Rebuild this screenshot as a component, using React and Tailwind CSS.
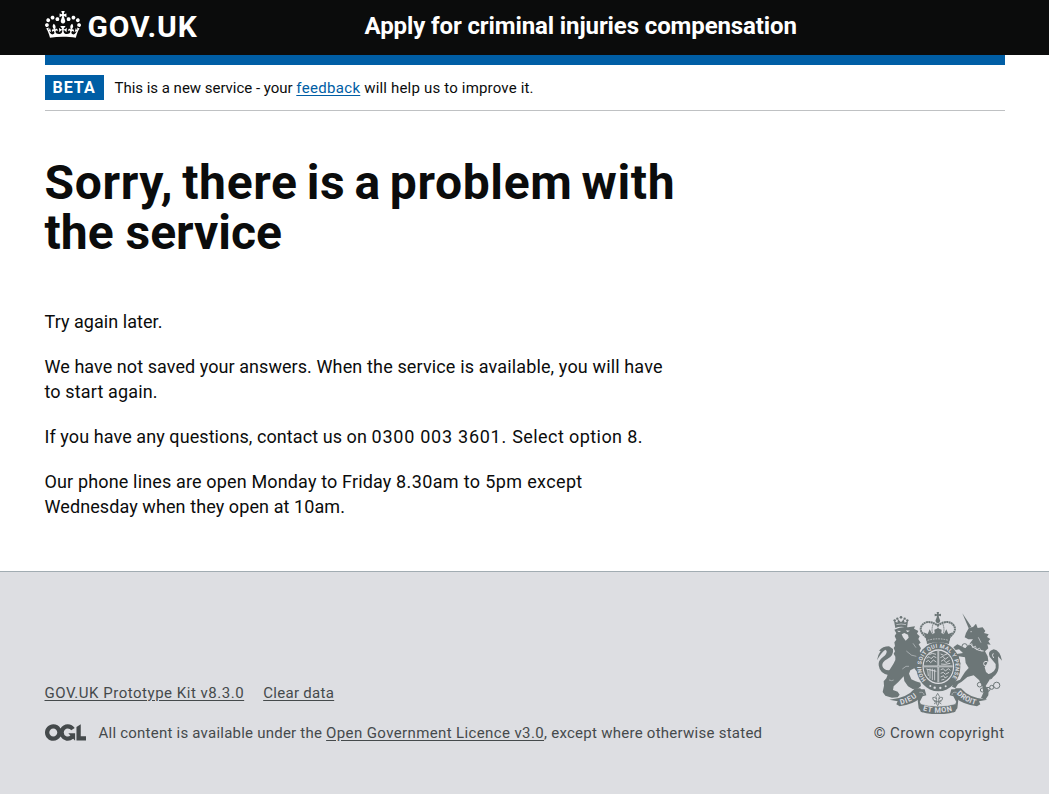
import React from "react";

function Crown() {
  return (
    <svg className="h-[27px] w-9 shrink-0" viewBox="0 0 132 97" preserveAspectRatio="none" fill="currentColor" aria-hidden="true">
      <path
        fillRule="evenodd"
        d="M25 30.2c3.5 1.5 7.7-.2 9.1-3.7 1.5-3.6-.2-7.8-3.9-9.2-3.6-1.4-7.6.3-9.1 3.9-1.4 3.5.3 7.5 3.9 9zM9 39.5c3.6 1.5 7.8-.2 9.2-3.7 1.5-3.6-.2-7.8-3.9-9.1-3.6-1.5-7.6.2-9.1 3.8-1.4 3.5.3 7.5 3.8 9zM4.4 57.2c3.5 1.5 7.7-.2 9.1-3.8 1.5-3.6-.2-7.7-3.9-9.1-3.5-1.5-7.6.3-9.1 3.8-1.4 3.5.3 7.6 3.9 9.1zm38.3-21.4c3.5 1.5 7.7-.2 9.1-3.8 1.5-3.6-.2-7.7-3.9-9.1-3.6-1.5-7.6.3-9.1 3.8-1.3 3.6.4 7.7 3.9 9.1zm64.4-5.6c-3.6 1.5-7.8-.2-9.1-3.7-1.5-3.6.2-7.8 3.8-9.2 3.6-1.4 7.7.3 9.2 3.9 1.3 3.5-.4 7.5-3.9 9zm15.9 9.3c-3.6 1.5-7.7-.2-9.1-3.7-1.5-3.6.2-7.8 3.7-9.1 3.6-1.5 7.7.2 9.2 3.8 1.5 3.5-.3 7.5-3.8 9zm4.7 17.7c-3.6 1.5-7.8-.2-9.2-3.8-1.5-3.6.2-7.7 3.9-9.1 3.6-1.5 7.7.3 9.2 3.8 1.3 3.5-.4 7.6-3.9 9.1zM89.3 35.8c-3.6 1.5-7.8-.2-9.2-3.8-1.4-3.6.2-7.7 3.9-9.1 3.6-1.5 7.7.3 9.2 3.8 1.4 3.6-.3 7.7-3.9 9.1zM69.7 17.7l8.9 4.7V9.3l-8.9 2.8c-.2-.3-.5-.6-.9-.9L72.4 0H59.6l3.5 11.2c-.3.3-.6.5-.9.9l-8.8-2.8v13.1l8.8-4.7c.3.3.6.7.9.9l-5 15.4v.1c-.2.8-.4 1.6-.4 2.4 0 4.1 3.1 7.5 7 8.1h.2c.3 0 .7.1 1 .1.4 0 .7 0 1-.1h.2c4-.6 7.1-4.1 7.1-8.1 0-.8-.1-1.7-.4-2.4V34l-5.1-15.4c.4-.2.7-.6 1-.9zM66 92.8c16.9 0 32.8 1.1 47.1 3.2 4-16.9 8.9-26.7 14-33.5l-9.6-3.4c1 4.9 1.1 7.2 0 10.2-1.5-1.4-3-4.3-4.2-8.7L108.6 76c2.8-2 5-3.2 7.5-3.3-4.4 9.4-10 11.9-13.6 11.2-4.3-.8-6.3-4.6-5.6-7.9 1-4.7 5.7-5.9 8-.5 4.3-8.7-3-11.4-7.6-8.8 7.1-7.2 7.9-13.5 2.1-21.1-8 6.1-8.1 12.3-4.5 20.8-4.7-5.4-12.1-2.5-9.5 6.2 3.4-5.2 7.9-2 7.2 3.1-.6 4.3-6.4 7.8-13.5 7.2-10.3-.9-10.9-8-11.2-13.8 2.5-.5 7.1 1.8 11 7.3L80.2 60c-4.1 4.4-8 5.3-12.3 5.4 1.4-4.4 8-11.6 8-11.6H55.5s6.4 7.2 7.9 11.6c-4.2-.1-8-1-12.3-5.4l1.4 16.4c3.9-5.5 8.5-7.7 10.9-7.3-.3 5.8-.9 12.8-11.1 13.8-7.2.6-12.9-2.9-13.5-7.2-.7-5 3.8-8.3 7.1-3.1 2.7-8.7-4.6-11.6-9.4-6.2 3.7-8.5 3.6-14.7-4.6-20.8-5.8 7.6-5 13.9 2.2 21.1-4.7-2.6-11.9.1-7.7 8.8 2.3-5.5 7.1-4.2 8.1.5.7 3.3-1.3 7.1-5.7 7.9-3.5.7-9-1.8-13.5-11.2 2.5.1 4.7 1.3 7.5 3.3l-4.7-15.4c-1.2 4.4-2.7 7.2-4.3 8.7-1.1-3-.9-5.3 0-10.2l-9.5 3.4c5 6.9 9.9 16.7 14 33.5 14.8-2.1 30.8-3.2 47.7-3.2z"
      />
    </svg>
  );
}

function OglMark() {
  return (
    <svg className="h-[17px] w-[41px] shrink-0" viewBox="0 0 483.2 195.7" fill="currentColor" aria-hidden="true">
      <path d="M421.5 142.8V.1l-50.7 32.3v161.1h112.4v-50.7zm-122.3-9.6A47.12 47.12 0 0 1 221 97.8c0-26 21.1-47.1 47.1-47.1 16.7 0 31.4 8.7 39.7 21.8l42.7-27.2A97.63 97.63 0 0 0 268.1 0c-36.5 0-68.3 20.1-85.1 49.7A98 98 0 0 0 97.8 0C43.9 0 0 43.9 0 97.8s43.9 97.8 97.8 97.8c36.5 0 68.3-20.1 85.1-49.7a97.76 97.76 0 0 0 149.6 25.4l19.4 22.2h3v-87.8h-80l24.3 27.5zM97.8 145c-26 0-47.1-21.1-47.1-47.1s21.1-47.1 47.1-47.1 47.1 21.1 47.1 47.1S123.8 145 97.8 145" />
    </svg>
  );
}

function RoyalArms() {
  return (
    <svg className="h-[102px] w-[125px] text-[#6c7677]" viewBox="36 36 375 306" fill="currentColor" aria-hidden="true">
      <defs>
        <path id="garter" d="M183 240A51 57 0 1 1 257 240" />
        <path id="dieu" d="M107 314Q140 307 162 284" />
        <path id="etmon" d="M173 331Q219 345 266 331" />
        <path id="droit" d="M275 281Q298 307 335 315" />
      </defs>

      {/* lion */}
      <path d="M91 84L87 62L97 68L99 58L108 67L116 58L119 68L129 62L126 84Q108 77 91 84Z" />
      <g>
        <circle cx="89" cy="61" r="3.500" /><circle cx="97" cy="56" r="3.500" /><circle cx="108" cy="52" r="4" /><circle cx="119" cy="56" r="3.500" /><circle cx="127" cy="61" r="3.500" />
      </g>
      <path d="M94 74Q108 70 123 74" className="fill-none stroke-[#dddee2] stroke-2" />
      <path d="M88 89Q108 79 129 82L150 79L147 86L160 93L156 101L164 109L160 117L167 128L161 133L168 145L164 153L170 164L167 176L171 188L164 210L154 213L148 205L136 211L132 221L139 238L152 244L166 248L168 258L158 266L143 267L129 259L118 243L116 229L100 246L86 259L84 270L98 275L104 284L98 292L81 293L61 287L53 276L57 257L56 244L64 235L73 211L85 192L91 180L91 170L86 161L90 154L86 144L90 138L88 127L94 119L89 108L94 100Z" />
      <path d="M72 226Q44 221 41 196Q39 181 55 170Q66 163 65 153L61 149Q48 158 36 181Q38 165 47 153L42 152Q53 139 72 139L84 147Q87 167 67 177Q50 186 52 198Q56 213 77 210Z" />
      <path d="M110 103L118 99L129 104L131 113L122 122L114 112ZM96 92L108 93L102 97ZM123 91L135 92L127 97Z" className="fill-[#dddee2]" />
      <path d="M124 153Q140 170 154 169M112 207Q124 195 132 199M72 240Q81 244 86 240M144 130L153 143" className="fill-none stroke-[#dddee2] stroke-[1.5]" />

      {/* unicorn */}
      <path d="M292 40L319 80L311 85Z" />
      <path d="M312 83L324 81L333 71L338 84L353 82L361 93L357 99L371 103L366 111L376 117L370 124L377 134L367 133L370 145L360 154L368 169L370 184L359 202L363 216L374 225L373 241L362 258L371 269L370 286L361 299L348 294L355 278L352 259L342 240L326 226L307 231L290 245L279 252L271 265L261 260L266 246L285 239L300 216L311 204L302 189L300 172L281 169L287 193L278 196L271 175L275 162L294 159L282 148L272 150L265 142L277 133L301 145L313 132L324 118L310 118L299 112L303 99Z" />
      <path d="M363 226Q397 216 392 192Q384 182 374 170Q366 154 386 148Q405 151 411 182L399 169L400 187Q407 224 369 240Z" />
      <path d="M385 160Q379 165 386 174" className="fill-none stroke-[#dddee2] stroke-[3]" />
      <path d="M316 132Q332 153 356 153" className="fill-none stroke-[#dddee2] stroke-[3]" />
      <path d="M314 125L311 135L321 131L322 143L331 138L335 149L343 144L351 155" className="fill-none stroke-[#dddee2] stroke-[2]" />
      <path d="M340 112L348 128M316 95L321 95" className="fill-none stroke-[#dddee2] stroke-2" />
      <g className="fill-none stroke-current stroke-[3]">
        <circle cx="299" cy="139" r="8" /><circle cx="363" cy="191" r="7" className="stroke-[#dddee2]" /><circle cx="375" cy="230" r="7" />
        <circle cx="344" cy="254" r="7" /><circle cx="352" cy="270" r="6" /><circle cx="369" cy="268" r="6" /><circle cx="380" cy="262" r="6" /><circle cx="395" cy="256" r="9.500" />
      </g>

      {/* crown above the shield */}
      <path d="M215 36H222L221 43L228 41V49L221 47L223 57H214L216 47L209 49V41L216 43Z" />
      <circle cx="218.500" cy="62" r="7" />
      <g className="fill-none stroke-current">
        <path d="M184 112Q159 92 171 76Q187 56 218 76Q250 56 266 76Q278 92 253 112" className="stroke-[6] [stroke-dasharray:6_1.2]" />
        <path d="M219 66V98M204 73Q197 94 207 106M234 73Q241 94 231 106" className="stroke-[3] [stroke-dasharray:4_2]" />
      </g>
      <path d="M181 108L175 97L188 102L194 88L202 103L209 99L208 89L219 85L230 89L229 99L236 103L244 88L250 102L263 97L257 108L254 122Q219 112 184 122Z" />
      <path d="M184 117Q219 107 254 117L252 132Q219 121 186 132Z" />
      <path d="M188 121Q219 112 250 121" className="fill-none stroke-[#dddee2] stroke-2 [stroke-dasharray:5_3]" />

      {/* garter and shield */}
      <ellipse cx="220" cy="200" rx="66" ry="74" />
      <ellipse cx="220" cy="200" rx="47.500" ry="52" className="fill-[#dddee2]" />
      <text className="fill-[#dddee2] font-['Roboto'] text-[17px] font-bold"><textPath href="#garter" textLength="246" lengthAdjust="spacing">HONI SOIT QUI MAL Y PENSE</textPath></text>
      <ellipse cx="220" cy="200" rx="44" ry="48" />
      <path d="M220 153V247M177 199H263" className="stroke-[#dddee2] stroke-[5]" />
      <path d="M220 153V247M177 199H263" className="stroke-current stroke-[1.2]" />
      <g className="fill-none stroke-[#dddee2] stroke-[2.5]">
        <path d="M185 175L192 170L198 176L206 169L214 173M183 186L190 181L197 188L205 180L214 186M193 164L202 160L213 163M227 162L236 166L246 162M226 173L234 169L240 178L250 171M228 184L236 179L243 188L254 181M228 192L240 193L256 190" />
        <path d="M188 208L190 228M195 206V236M202 206V240M209 208V241M184 207L214 214M227 209L235 206L241 213L250 206L256 211M227 220L235 217L241 223L252 217M227 231L236 227L240 234L248 229M229 240L238 238" />
      </g>
      <g className="fill-[#dddee2]">
        <circle cx="196" cy="258" r="3" /><circle cx="209" cy="263" r="3.500" /><circle cx="226" cy="264" r="3.500" /><circle cx="242" cy="259" r="3" />
      </g>

      {/* motto ribbon */}
      <path d="M73 299Q125 296 150 265L166 265L174 275L168 292Q145 314 104 319L94 313L98 304Z" />
      <path d="M162 268L179 268L184 286L173 289L164 306L173 317L172 338L161 325L158 300Z" />
      <path d="M367 299Q313 296 288 265L272 265L264 275L270 292Q293 314 336 319L346 313L342 304Z" />
      <path d="M276 268L259 268L254 286L265 289L274 306L265 317L266 338L277 325L280 300Z" />
      <path d="M165 311Q219 326 274 311L271 335Q219 351 167 335Z" />
      <path d="M163 277Q177 275 177 285M275 277Q261 275 261 285M166 311Q219 327 273 311" className="fill-none stroke-[#dddee2] stroke-[1.5]" />
      <g className="fill-[#dddee2] font-['Roboto'] text-[22px] font-bold">
        <text><textPath href="#dieu" textLength="55">DIEU</textPath></text>
        <text><textPath href="#etmon" textLength="90">ET MON</textPath></text>
        <text><textPath href="#droit" textLength="66">DROIT</textPath></text>
      </g>
      <path d="M218 280Q227 289 221 299V312L218 317L215 312V299Q209 289 218 280ZM213 303Q202 303 203 293Q210 288 214 297M223 303Q234 303 233 293Q226 288 222 297M207 305H229M214 307L207 312M222 307L229 312" className="fill-none stroke-current stroke-[2.5]" />
    </svg>
  );
}

export default function App() {
  return (
    <div className="flex min-h-[794px] w-full flex-col bg-white font-['Roboto',sans-serif] text-[#0b0c0c]">
      <header className="h-[55px] bg-[#0b0c0c] text-white">
        <div className="mx-auto flex w-[960px]">
          <a href="#" className="flex w-[320px] gap-[7px] pt-[11px]">
            <Crown />
            <span className="text-[30px] leading-[31px] font-bold tracking-[0.9px]">GOV.UK</span>
          </a>
          <a href="#" className="pt-3 text-2xl leading-7 font-bold tracking-[-0.11px] whitespace-nowrap">
            Apply for criminal injuries compensation
          </a>
        </div>
      </header>

      <div className="mx-auto flex w-[960px] grow flex-col">
        <div className="h-[10px] shrink-0 bg-[#005ea5]" />
        <div className="flex h-[46px] shrink-0 items-start border-b border-[#bfc1c3] pt-[10px]">
          <strong className="mr-[11px] h-[25px] w-[59px] bg-[#005ea5] pl-2 text-base leading-[25px] font-bold tracking-[1px] text-white">BETA</strong>
          <p className="text-[15px] leading-[27px] whitespace-pre">
            <span className="tracking-[-0.02px]">This is a new service - your </span>
            <a href="#" className="tracking-[0.32px] text-[#005ea5] underline underline-offset-2">feedback</a>
            <span className="tracking-[0.18px]"> will help us to improve it.</span>
          </p>
        </div>

        <main className="pt-[47px] whitespace-nowrap">
          <h1 className="text-5xl leading-[50px] font-bold">
            <span className="tracking-[0.65px] [word-spacing:-3.5px]">Sorry, there is a problem with</span>
            <br />
            the service
          </h1>
          <div className="flex flex-col gap-5 pt-[51px] text-[18px] leading-[25px]">
            <p className="tracking-[0.05px]">Try again later.</p>
            <p className="tracking-[0.14px]">
              <span className="tracking-[0.06px]">We have not saved your answers.</span> When the service is available, you will have
              <br />
              to start again.
            </p>
            <p className="tracking-[0.08px]">
              If you have any questions, contact us on <span className="tracking-[0.75px]">0300 003 3601. </span>
              <span className="tracking-[0.42px]">Select option 8.</span>
            </p>
            <p className="tracking-[0.15px]">
              Our phone lines are open Monday to Friday <span className="tracking-[0.36px]">8.30am to 5pm except</span>
              <br />
              <span className="tracking-[0.09px]">Wednesday when they open at 10am.</span>
            </p>
          </div>
        </main>
      </div>

      <footer className="h-[223px] border-t border-[#a1acb2] bg-[#dddee2] text-[15px] leading-5 text-[#454a4c]">
        <div className="mx-auto flex w-[960px] items-end justify-between pt-10 whitespace-nowrap">
          <div>
            <div className="mb-5 flex gap-[19px]">
              <a href="#" className="tracking-[0.52px] underline underline-offset-2">GOV.UK Prototype Kit v8.3.0</a>
              <a href="#" className="tracking-[0.3px] underline underline-offset-2">Clear data</a>
            </div>
            <div className="flex items-center gap-[13px]">
              <span className="-mt-[2px]"><OglMark /></span>
              <p className="tracking-[0.23px]">
                All content is available under the{" "}
                <a href="#" className="tracking-[0.38px] underline underline-offset-2">Open Government Licence v3.0</a>
                <span className="tracking-[0.26px]">, except where otherwise stated</span>
              </p>
            </div>
          </div>
          <a href="#" className="flex flex-col items-end gap-[9px]">
            <span className="pr-[3px]"><RoyalArms /></span>
            <span className="tracking-[0.38px]">© Crown copyright</span>
          </a>
        </div>
      </footer>
    </div>
  );
}
